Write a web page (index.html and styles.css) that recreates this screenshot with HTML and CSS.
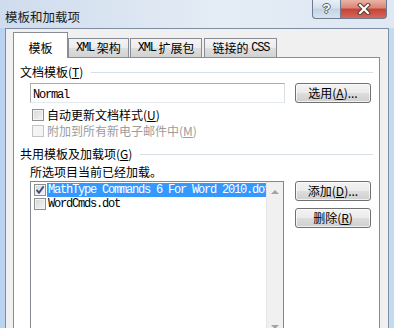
FILE: index.html
```html
<!DOCTYPE html>
<html>
<head>
<meta charset="utf-8">
<link rel="stylesheet" href="styles.css">
</head>
<body>
<div class="window">
  <div class="titlebar">
    <span class="title">模板和加载项</span>
    <div class="caption">
      <div class="cbtn help">?</div>
      <div class="cbtn close">
        <svg width="14" height="12" viewBox="0 0 14 12">
          <path d="M3 2 L11 10 M11 2 L3 10" stroke="#5a3a36" stroke-width="4.2" stroke-linecap="square" fill="none"/>
          <path d="M3 2 L11 10 M11 2 L3 10" stroke="#ffffff" stroke-width="2.2" stroke-linecap="square" fill="none"/>
        </svg>
      </div>
    </div>
  </div>
  <div class="client">
    <div class="tabs">
      <div class="tab active">模板</div>
      <div class="tab"><span class="mono">XML</span>&nbsp;架构</div>
      <div class="tab t3"><span class="mono">XML</span>&nbsp;扩展包</div>
      <div class="tab t4">链接的&nbsp;<span class="mono">CSS</span></div>
    </div>
    <div class="panel">
      <div class="group"><span>文档模板(<u>T</u>)</span><i class="line"></i></div>
      <div class="row row-input">
        <div class="input"><span class="mono">Normal</span></div>
        <div class="btn">选用(<u>A</u>)...</div>
      </div>
      <div class="check first"><span class="box"></span><span>自动更新文档样式(<u>U</u>)</span></div>
      <div class="check disabled"><span class="box"></span><span>附加到所有新电子邮件中(<u>M</u>)</span></div>
      <div class="group g2"><span>共用模板及加载项(<u>G</u>)</span><i class="line"></i></div>
      <div class="note">所选项目当前已经加载。</div>
      <div class="row list-row">
        <div class="listbox">
          <div class="items">
            <div class="item">
              <span class="box lbox">
                <svg width="10" height="10" viewBox="0 0 10 10"><path d="M1.5 4.8 L4 7.8 L8.6 1.4" stroke="#3a4d7e" stroke-width="1.8" fill="none"/></svg>
              </span>
              <span class="mono sel">MathType Commands 6 For Word 2010.dot</span>
            </div>
            <div class="item">
              <span class="box lbox"></span>
              <span class="mono txt">WordCmds.dot</span>
            </div>
          </div>
          <div class="scrollbar">
            <div class="arrow"><i class="tri up"></i></div>
            <div class="track"></div>
            <div class="arrow"><i class="tri down"></i></div>
          </div>
        </div>
        <div class="btns">
          <div class="btn">添加(<u>D</u>)...</div>
          <div class="btn">删除(<u>R</u>)</div>
        </div>
      </div>
    </div>
  </div>
</div>
</body>
</html>
```
FILE: styles.css
```css
* { box-sizing: border-box; margin: 0; padding: 0; }
html, body { width: 394px; height: 328px; overflow: hidden; }
body {
  font-family: "Noto Sans CJK SC", "Noto Sans", sans-serif;
  font-size: 12px;
  color: #000;
  background: #bfd5ee;
}
u { text-decoration: underline; text-underline-offset: 1px; }
.mono {
  font-family: "Liberation Mono", "Noto Sans CJK SC", monospace;
  font-size: 12px;
  letter-spacing: -1.2px;
}
.window {
  height: 328px;
  display: flex;
  flex-direction: column;
  background: linear-gradient(90deg, #b9d3f0, #cfe0f3 50%, #c4daf1);
}
.titlebar {
  height: 28px;
  flex: none;
  display: flex;
  align-items: flex-start;
  padding: 0 7px 0 5px;
  background: linear-gradient(90deg, #cfdced, #e4ecf5 55%, #dfe8f3);
}
.title { margin-top: 9px; line-height: 16px; color: #1b1b1b; font-size: 12.5px; }
.caption { margin-left: auto; display: flex; }
.cbtn {
  height: 19px;
  border: 1px solid #6c7b90;
  border-top: none;
  display: flex;
  align-items: center;
  justify-content: center;
}
.help {
  width: 28px;
  border-right: none;
  border-radius: 0 0 0 4px;
  background: linear-gradient(#e9eff7, #d5e0ec 45%, #c3d2e3 50%, #d8e3ef);
  color: #fff;
  font-family: "Liberation Sans", sans-serif;
  font-weight: bold;
  font-size: 13px;
  line-height: 16px;
  text-shadow: 1px 0 #4d5c70, -1px 0 #4d5c70, 0 1px #4d5c70, 0 -1px #4d5c70;
}
.close {
  width: 47px;
  border-radius: 0 0 4px 0;
  background: linear-gradient(#eab3a6, #d98474 45%, #c54236 50%, #d4695a);
}
.client {
  flex: 1;
  min-height: 0;
  margin: 0 5px;
  border: 1px solid #7d8ea5;
  border-bottom: none;
  background: #f0f0f0;
  display: flex;
  flex-direction: column;
  padding: 3px 8px 0 7px;
}
.tabs {
  height: 25px;
  flex: none;
  display: flex;
  align-items: flex-end;
  position: relative;
  z-index: 1;
}
.tab {
  height: 19px;
  border: 1px solid #898c95;
  border-bottom: none;
  padding: 0 7px;
  line-height: 16px;
  display: flex;
  align-items: center;
  white-space: nowrap;
  background: linear-gradient(#f4f4f4, #ececec 50%, #dedede 51%, #d2d2d2);
}
.tab.active {
  height: 26px;
  width: 55px;
  justify-content: center;
  padding: 4px 0 0;
  margin-bottom: -1px;
  background: #fff;
}
.t3 { margin-left: 1px; }
.t4 { margin-left: 2px; }
.panel {
  flex: 1;
  min-height: 0;
  overflow: hidden;
  background: #fff;
  border: 1px solid #898c95;
  border-bottom: none;
  padding-top: 6px;
}
.group {
  display: flex;
  align-items: center;
  line-height: 16px;
  padding: 0 6px;
}
.group .line { flex: 1; height: 1px; background: #d5dfe5; margin-left: 8px; }
.g2 { margin-top: 7px; }
.row { display: flex; padding: 0 8px 0 16px; }
.row-input { margin-top: 3px; gap: 10px; height: 20px; }
.input {
  flex: 1;
  height: 20px;
  border: 1px solid #abadb3;
  border-right-color: #dbdfe6;
  border-bottom-color: #e3e9ef;
  padding-left: 2px;
  line-height: 18px;
}
.btn {
  width: 76px;
  height: 20px;
  border: 1px solid #707070;
  border-radius: 3px;
  display: flex;
  align-items: center;
  justify-content: center;
  line-height: 16px;
  white-space: nowrap;
  background: linear-gradient(#f3f3f3, #ebebeb 48%, #dddddd 52%, #cfcfcf);
  box-shadow: inset 0 0 0 1px rgba(255,255,255,0.7);
}
.check {
  display: flex;
  align-items: center;
  height: 16px;
  line-height: 16px;
  padding-left: 18px;
}
.check.first { margin-top: 4px; }
.box {
  width: 12px;
  height: 12px;
  flex: none;
  border: 1px solid #8e8f8f;
  background: linear-gradient(135deg, #d6d6d6, #f5f5f5);
  box-shadow: inset 0 0 0 1px #f4f4f4;
  display: flex;
  align-items: center;
  justify-content: center;
}
.check .box { margin-right: 3px; }
.check.disabled { color: #9c9c9c; }
.check.disabled .box { border-color: #c4c4c4; background: #f4f4f4; box-shadow: none; }
.note { margin-top: 2px; line-height: 16px; padding-left: 16px; }
.list-row { margin-top: 1px; gap: 11px; align-items: flex-start; }
.listbox {
  width: 254px;
  height: 155px;
  flex: none;
  border: 1px solid #828790;
  display: flex;
}
.items { flex: 1; min-width: 0; overflow: hidden; padding: 1px 0 0 3px; }
.item { height: 14px; display: flex; align-items: center; white-space: nowrap; }
.lbox { margin-right: 1px; }
.sel { background: #3399ff; color: #fff; padding-left: 1px; line-height: 14px; }
.txt { padding-left: 1px; line-height: 14px; }
.scrollbar {
  width: 17px;
  flex: none;
  display: flex;
  flex-direction: column;
  background: #f0f0f0;
  border-left: 1px solid #e6e6e6;
}
.arrow { height: 17px; flex: none; display: flex; align-items: center; justify-content: center; }
.track { flex: 1; }
.tri { width: 0; height: 0; border-left: 4px solid transparent; border-right: 4px solid transparent; }
.tri.up { border-bottom: 4px solid #a3a3a3; margin-top: 2px; }
.tri.down { border-top: 4px solid #a3a3a3; }
.btns { display: flex; flex-direction: column; gap: 7px; }
```
